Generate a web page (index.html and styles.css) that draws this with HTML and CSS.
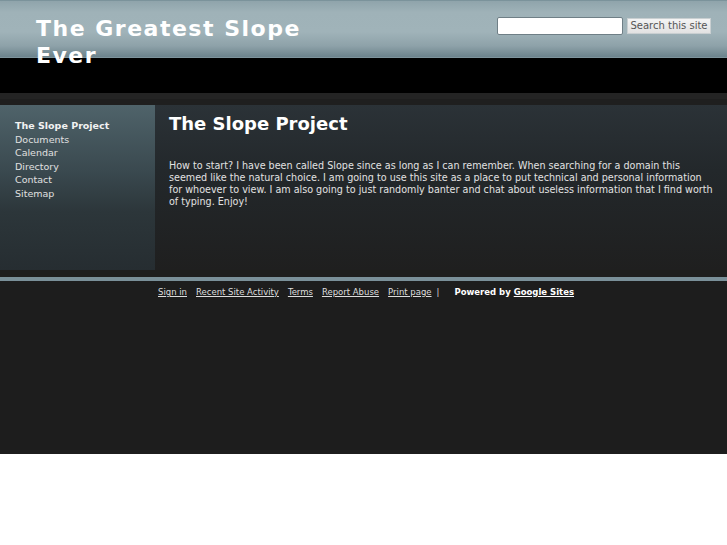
FILE: index.html
```html
<!DOCTYPE html>
<html>
<head>
<meta charset="utf-8">
<link rel="stylesheet" href="styles.css">
</head>
<body>
<div class="page">
  <header class="header">
    <h1 class="site-title">The Greatest Slope Ever</h1>
    <form class="search">
      <input class="search-input" type="text">
      <button class="search-btn" type="button">Search this site</button>
    </form>
  </header>
  <div class="blackband"></div>
  <div class="darkband"></div>
  <div class="main">
    <nav class="sidebar">
      <a class="nav-link current">The Slope Project</a>
      <a class="nav-link">Documents</a>
      <a class="nav-link">Calendar</a>
      <a class="nav-link">Directory</a>
      <a class="nav-link">Contact</a>
      <a class="nav-link">Sitemap</a>
    </nav>
    <section class="content">
      <h2 class="page-title">The Slope Project</h2>
      <p class="text">How to start? I have been called Slope since as long as I can remember. When searching for a domain this seemed like the natural choice. I am going to use this site as a place to put technical and personal information for whoever to view. I am also going to just randomly banter and chat about useless information that I find worth of typing. Enjoy!</p>
    </section>
  </div>
  <div class="gap"></div>
  <div class="footline"></div>
  <footer class="footer">
    <a class="flink">Sign in</a>
    <a class="flink">Recent Site Activity</a>
    <a class="flink">Terms</a>
    <a class="flink">Report Abuse</a>
    <a class="flink">Print page</a>
    <span class="sep">|</span>
    <span class="powered">Powered by <a class="glink">Google Sites</a></span>
  </footer>
</div>
</body>
</html>
```
FILE: styles.css
```css
html, body {
  margin: 0;
  padding: 0;
  background: #ffffff;
  font-family: "DejaVu Sans", Verdana, sans-serif;
}
.page {
  width: 727px;
  background: #1e1e1e;
}
.header {
  box-sizing: border-box;
  height: 58px;
  border-top: 1px solid #7b939b;
  border-bottom: 1px solid #7e949c;
  background: linear-gradient(to bottom, #8fa4ab 0%, #9fb2b8 20%, #a0b3b9 55%, #8ea2a9 80%, #6c838c 100%);
  display: flex;
  justify-content: space-between;
  align-items: flex-start;
}
.site-title {
  margin: 14px 0 0 36px;
  width: 290px;
  font-size: 22px;
  font-weight: bold;
  letter-spacing: 1.5px;
  line-height: 27px;
  color: #ffffff;
  position: relative;
  z-index: 2;
}
.search {
  margin: 16px 16px 0 0;
  display: flex;
  align-items: center;
  gap: 4px;
}
.search-input {
  width: 126px;
  height: 18px;
  box-sizing: border-box;
  border: 1px solid #6f7f86;
  border-radius: 2px;
  background: #fff;
  padding: 0;
  margin: 0;
}
.search-btn {
  height: 16px;
  box-sizing: border-box;
  width: 84px;
  padding: 0;
  margin: 0;
  border: 1px solid #c9cfd1;
  background: linear-gradient(#f4f4f4, #e2e2e2);
  font-family: "DejaVu Sans", sans-serif;
  font-size: 10px;
  color: #555;
  line-height: 14px;
}
.blackband {
  height: 35px;
  background: #000;
}
.darkband {
  height: 12px;
  background: linear-gradient(#242424 0%, #242424 50%, #1f1f1f 50%, #1f1f1f 100%);
}
.main {
  display: flex;
  height: 165px;
}
.sidebar {
  width: 155px;
  flex: none;
  box-sizing: border-box;
  padding: 14px 0 0 15px;
  background: linear-gradient(to bottom, #4f636a 0%, #3a494f 40%, #2c363a 65%, #262d31 100%);
  display: flex;
  flex-direction: column;
}
.nav-link {
  font-size: 9.5px;
  line-height: 13.6px;
  color: #e0e0e0;
}
.nav-link.current {
  font-weight: bold;
  color: #f2f2f2;
}
.content {
  flex: 1;
  box-sizing: border-box;
  padding: 7px 12px 0 14px;
  background: linear-gradient(to bottom, #2b3237 0%, #23282b 40%, #1f1f1f 100%);
}
.page-title {
  margin: 0;
  font-size: 18px;
  font-weight: bold;
  line-height: 24px;
  color: #fff;
}
.text {
  margin: 24px 0 0 0;
  font-size: 9.6px;
  line-height: 12px;
  color: #e2e2e2;
}
.gap {
  height: 7px;
  background: #1e1e1e;
}
.footline {
  height: 4px;
  background: #7a9099;
}
.footer {
  height: 173px;
  box-sizing: border-box;
  padding: 5px 0 0 158px;
  background: #1d1d1d;
  font-size: 8.5px;
  color: #ddd;
  display: flex;
  align-items: flex-start;
  gap: 9px;
  line-height: 12px;
}
.flink {
  color: #ddd;
  text-decoration: underline;
}
.sep {
  margin-left: -4px;
  margin-right: 6px;
}
.powered {
  font-weight: bold;
  color: #fff;
}
.glink {
  text-decoration: underline;
  color: #fff;
}
```
